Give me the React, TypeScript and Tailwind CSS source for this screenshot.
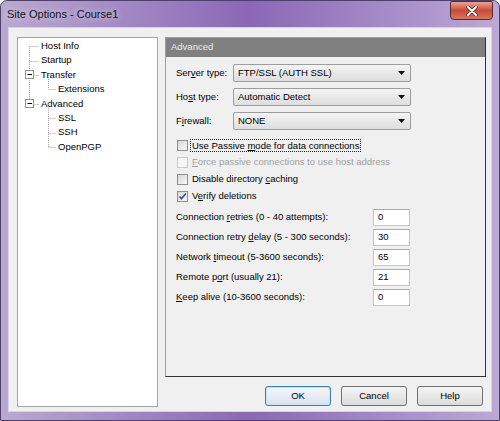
import React from 'react'

type TreeRow = { label: string; level: 0 | 1 }

const treeRows: TreeRow[] = [
  { label: 'Host Info', level: 0 },
  { label: 'Startup', level: 0 },
  { label: 'Transfer', level: 0 },
  { label: 'Extensions', level: 1 },
  { label: 'Advanced', level: 0 },
  { label: 'SSL', level: 1 },
  { label: 'SSH', level: 1 },
  { label: 'OpenPGP', level: 1 },
]

// row centres inside the tree panel (rows start 1px down, 14.4px apart)
const rowY = (i: number) => 1 + 7.2 + i * 14.4

function TreeLines() {
  const dot = { stroke: '#a0a0a0', strokeWidth: 1, strokeDasharray: '1 1' }
  const expanders = [2, 4]
  return (
    <svg className="pointer-events-none absolute left-0 top-0" width="139" height="130">
      {/* top level trunk */}
      <line x1="11.5" y1={rowY(0)} x2="11.5" y2={rowY(4)} {...dot} />
      {[0, 1, 2, 4].map((i) => (
        <line key={i} x1="11.5" y1={Math.round(rowY(i)) + 0.5} x2="21" y2={Math.round(rowY(i)) + 0.5} {...dot} />
      ))}
      {/* children of Transfer and Advanced */}
      <line x1="30.5" y1={rowY(2)} x2="30.5" y2={rowY(3)} {...dot} />
      <line x1="30.5" y1={rowY(4)} x2="30.5" y2={rowY(7)} {...dot} />
      {[3, 5, 6, 7].map((i) => (
        <line key={i} x1="30.5" y1={Math.round(rowY(i)) + 0.5} x2="38" y2={Math.round(rowY(i)) + 0.5} {...dot} />
      ))}
      {expanders.map((i) => {
        const y = Math.round(rowY(i))
        return (
          <g key={i}>
            <rect x="7.5" y={y - 4.5} width="8" height="8" fill="#fff" stroke="#939393" />
            <line x1="9.5" y1={y - 0.5} x2="14" y2={y - 0.5} stroke="#000" />
          </g>
        )
      })}
    </svg>
  )
}

function Combo({ value }: { value: string }) {
  return (
    <div className="flex h-[18px] w-[178px] items-center justify-between rounded-[2px] border border-[#9d9d9d] bg-gradient-to-b from-[#f4f4f4] to-[#dedede] pl-[4px] pr-[5px]">
      <span>{value}</span>
      <svg width="7" height="4" viewBox="0 0 7 4">
        <path d="M0 0h7L3.5 4z" fill="#111" />
      </svg>
    </div>
  )
}

function Check({ checked = false, disabled = false }: { checked?: boolean; disabled?: boolean }) {
  return (
    <span
      className={
        disabled
          ? 'flex h-[11px] w-[11px] shrink-0 items-center justify-center border border-[#c9c9c9] bg-[#f6f6f6]'
          : 'flex h-[11px] w-[11px] shrink-0 items-center justify-center border border-[#8e8f8f] bg-gradient-to-br from-[#d6d6d6] to-[#fafafa]'
      }
    >
      {checked && (
        <svg width="9" height="9" viewBox="0 0 9 9">
          <path d="M1.5 4.5l2 2.2L7.8 1.6" fill="none" stroke="#3d4f86" strokeWidth="1.6" />
        </svg>
      )}
    </span>
  )
}

function Field({ label, value }: { label: React.ReactNode; value: string }) {
  return (
    <div className="flex h-[17px] items-center">
      <span className="w-[197px]">{label}</span>
      <div className="flex h-[17px] w-[37px] items-center border border-[#c4c6cc] border-t-[#a9abb2] bg-white pl-[4px]">
        {value}
      </div>
    </div>
  )
}

export default function App() {
  return (
    <div className="flex h-[421px] w-[500px] flex-col overflow-hidden rounded-t-[7px] border border-[#4d416c] bg-gradient-to-r from-[#b9a9d0] via-[#8b67b5] to-[#bba9d5] text-[9.5px] text-black [font-family:'Liberation_Sans',Arial,sans-serif]">
      {/* title bar */}
      <div className="relative h-[26px] shrink-0">
        <span className="absolute left-[6px] top-[5px] text-[11px] text-[#111] [text-shadow:0_0_6px_rgba(240,235,248,0.95)]">
          Site Options - Course1
        </span>
        <div className="absolute right-[6px] top-0 flex h-[19px] w-[43px] items-center justify-center rounded-b-[4px] rounded-t-[2px] border border-[#5a2a2a] bg-gradient-to-b from-[#e7a597] via-[#c94a36] to-[#d7765e]">
          <svg width="12" height="10" viewBox="0 0 12 10">
            <path d="M2 1l8 8M10 1L2 9" stroke="#4a1c1c" strokeWidth="3.4" strokeLinecap="round" />
            <path d="M2 1l8 8M10 1L2 9" stroke="#fff" strokeWidth="2" strokeLinecap="round" />
          </svg>
        </div>
      </div>

      {/* client area */}
      <div className="flex flex-1 px-[7px] pb-[8px]">
        <div className="flex flex-1 border border-[#d9d1e6] bg-[#f0f0f0] pl-[8px] pt-[9px]">
          {/* option tree */}
          <div className="relative h-[370px] w-[141px] shrink-0 border border-[#a5a5a5] bg-white pt-[1px]">
            <TreeLines />
            {treeRows.map((row) => (
              <div
                key={row.label}
                className={row.level === 0 ? 'flex h-[14.4px] items-center pl-[23px]' : 'flex h-[14.4px] items-center pl-[40px]'}
              >
                {row.label}
              </div>
            ))}
          </div>

          <div className="ml-[7px] flex flex-col">
            {/* settings page */}
            <div className="flex h-[340px] w-[321px] flex-col border-b border-l border-r border-t border-b-[#333] border-l-[#a0a0a0] border-r-[#333] border-t-[#a0a0a0]">
              <div className="flex h-[19px] shrink-0 items-center bg-[#808080] pl-[5px] text-[#ededed]">Advanced</div>

              <div className="flex flex-col pl-[10px] pt-[7px]">
                <div className="flex flex-col gap-[6px]">
                  <div className="flex items-center">
                    <span className="w-[57px]">
                      Ser<u>v</u>er type:
                    </span>
                    <Combo value="FTP/SSL (AUTH SSL)" />
                  </div>
                  <div className="flex items-center">
                    <span className="w-[57px]">
                      Ho<u>s</u>t type:
                    </span>
                    <Combo value="Automatic Detect" />
                  </div>
                  <div className="flex items-center">
                    <span className="w-[57px]">
                      F<u>i</u>rewall:
                    </span>
                    <Combo value="NONE" />
                  </div>
                </div>

                <div className="mt-[7px] flex flex-col">
                  <div className="flex h-[17px] items-center pl-[1px]">
                    <Check />
                    <span className="ml-[2px] border border-dotted border-[#222] px-[1px] leading-[11px]">
                      Use Passive <u>m</u>ode for data connections
                    </span>
                  </div>
                  <div className="flex h-[17px] items-center pl-[1px] text-[#a0a0a0]">
                    <Check disabled />
                    <span className="ml-[4px]">
                      <u>F</u>orce passive connections to use host address
                    </span>
                  </div>
                  <div className="flex h-[17px] items-center pl-[1px]">
                    <Check />
                    <span className="ml-[4px]">
                      Disable directory <u>c</u>aching
                    </span>
                  </div>
                  <div className="flex h-[17px] items-center pl-[1px]">
                    <Check checked />
                    <span className="ml-[4px]">
                      V<u>e</u>rify deletions
                    </span>
                  </div>
                </div>

                <div className="mt-[4px] flex flex-col gap-[3px]">
                  <Field label={<>Connection <u>r</u>etries (0 - 40 attempts):</>} value="0" />
                  <Field label={<>Connection retry <u>d</u>elay (5 - 300 seconds):</>} value="30" />
                  <Field label={<>Network <u>t</u>imeout (5-3600 seconds):</>} value="65" />
                  <Field label={<>Remote p<u>o</u>rt (usually 21):</>} value="21" />
                  <Field label={<><u>K</u>eep alive (10-3600 seconds):</>} value="0" />
                </div>
              </div>
            </div>

            {/* dialog buttons */}
            <div className="mt-[9px] flex justify-end gap-[10px] pr-[3px]">
              <button className="h-[20px] w-[66px] rounded-[3px] border border-[#3c7fb1] bg-gradient-to-b from-[#f3f7fa] to-[#dae2ea] shadow-[inset_0_0_0_1px_#c8e4f8]">
                OK
              </button>
              <button className="h-[20px] w-[66px] rounded-[3px] border border-[#707070] bg-gradient-to-b from-[#f4f4f4] to-[#dcdcdc]">
                Cancel
              </button>
              <button className="h-[20px] w-[66px] rounded-[3px] border border-[#707070] bg-gradient-to-b from-[#f4f4f4] to-[#dcdcdc]">
                Help
              </button>
            </div>
          </div>
        </div>
      </div>
    </div>
  )
}
